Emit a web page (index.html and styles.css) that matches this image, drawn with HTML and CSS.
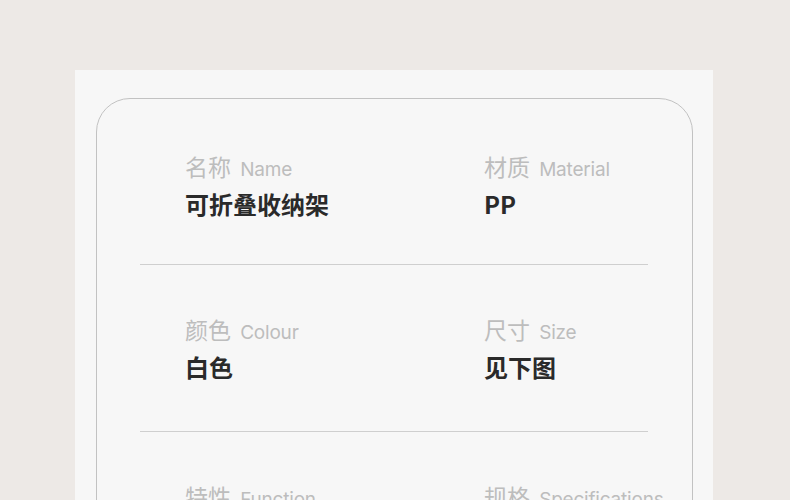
FILE: index.html
```html
<!DOCTYPE html>
<html lang="zh-CN">
<head>
    <meta charset="UTF-8">
    <meta name="viewport" content="width=device-width, initial-scale=1.0">
    <title>产品参数</title>
    <link rel="stylesheet" href="styles.css">
</head>
<body>
    <div class="panel">
        <div class="card">
            <div class="row">
                <div class="item">
                    <div class="label">名称 <span class="en">Name</span></div>
                    <div class="value">可折叠收纳架</div>
                </div>
                <div class="item">
                    <div class="label">材质 <span class="en">Material</span></div>
                    <div class="value">PP</div>
                </div>
            </div>
            <div class="row">
                <div class="item">
                    <div class="label">颜色 <span class="en">Colour</span></div>
                    <div class="value">白色</div>
                </div>
                <div class="item">
                    <div class="label">尺寸 <span class="en">Size</span></div>
                    <div class="value">见下图</div>
                </div>
            </div>
            <div class="row">
                <div class="item">
                    <div class="label">特性 <span class="en">Function</span></div>
                    <div class="value">可折叠</div>
                </div>
                <div class="item">
                    <div class="label">规格 <span class="en">Specifications</span></div>
                    <div class="value">单层 / 双层</div>
                </div>
            </div>
        </div>
    </div>
</body>
</html>
```

FILE: styles.css
```css
body {
    margin: 0;
    background-color: #ede9e6;
    font-family: "Noto Sans CJK SC", "Noto Sans", sans-serif;
    height: 500px;
    overflow: hidden;
}
.panel {
    width: 638px;
    margin: 70px 0 0 75px;
    padding: 28px 20px 0 21px;
    box-sizing: border-box;
    background-color: #f7f7f7;
    height: 600px;
}
.card {
    border: 1px solid #c2c2c2;
    border-radius: 34px;
    padding: 3px 44px 0 43px;
    height: 560px;
}
.row {
    display: grid;
    grid-template-columns: 299px 1fr;
    padding: 46px 0 46px 45px;
    border-bottom: 1px solid #cfcfcf;
}
.row:first-child {
    padding-bottom: 42px;
}
.label {
    font-size: 23px;
    line-height: 36px;
    height: 36px;
    color: #bdbdbd;
    white-space: nowrap;
}
.en {
    font-family: "Inter", "Noto Sans", sans-serif;
    font-size: 19px;
    line-height: 1;
    font-weight: 400;
    margin-left: 4px;
    letter-spacing: -0.2px;
}
.value {
    margin-top: 2px;
    font-size: 24px;
    line-height: 36px;
    font-weight: bold;
    color: #2a2a2a;
}
```
